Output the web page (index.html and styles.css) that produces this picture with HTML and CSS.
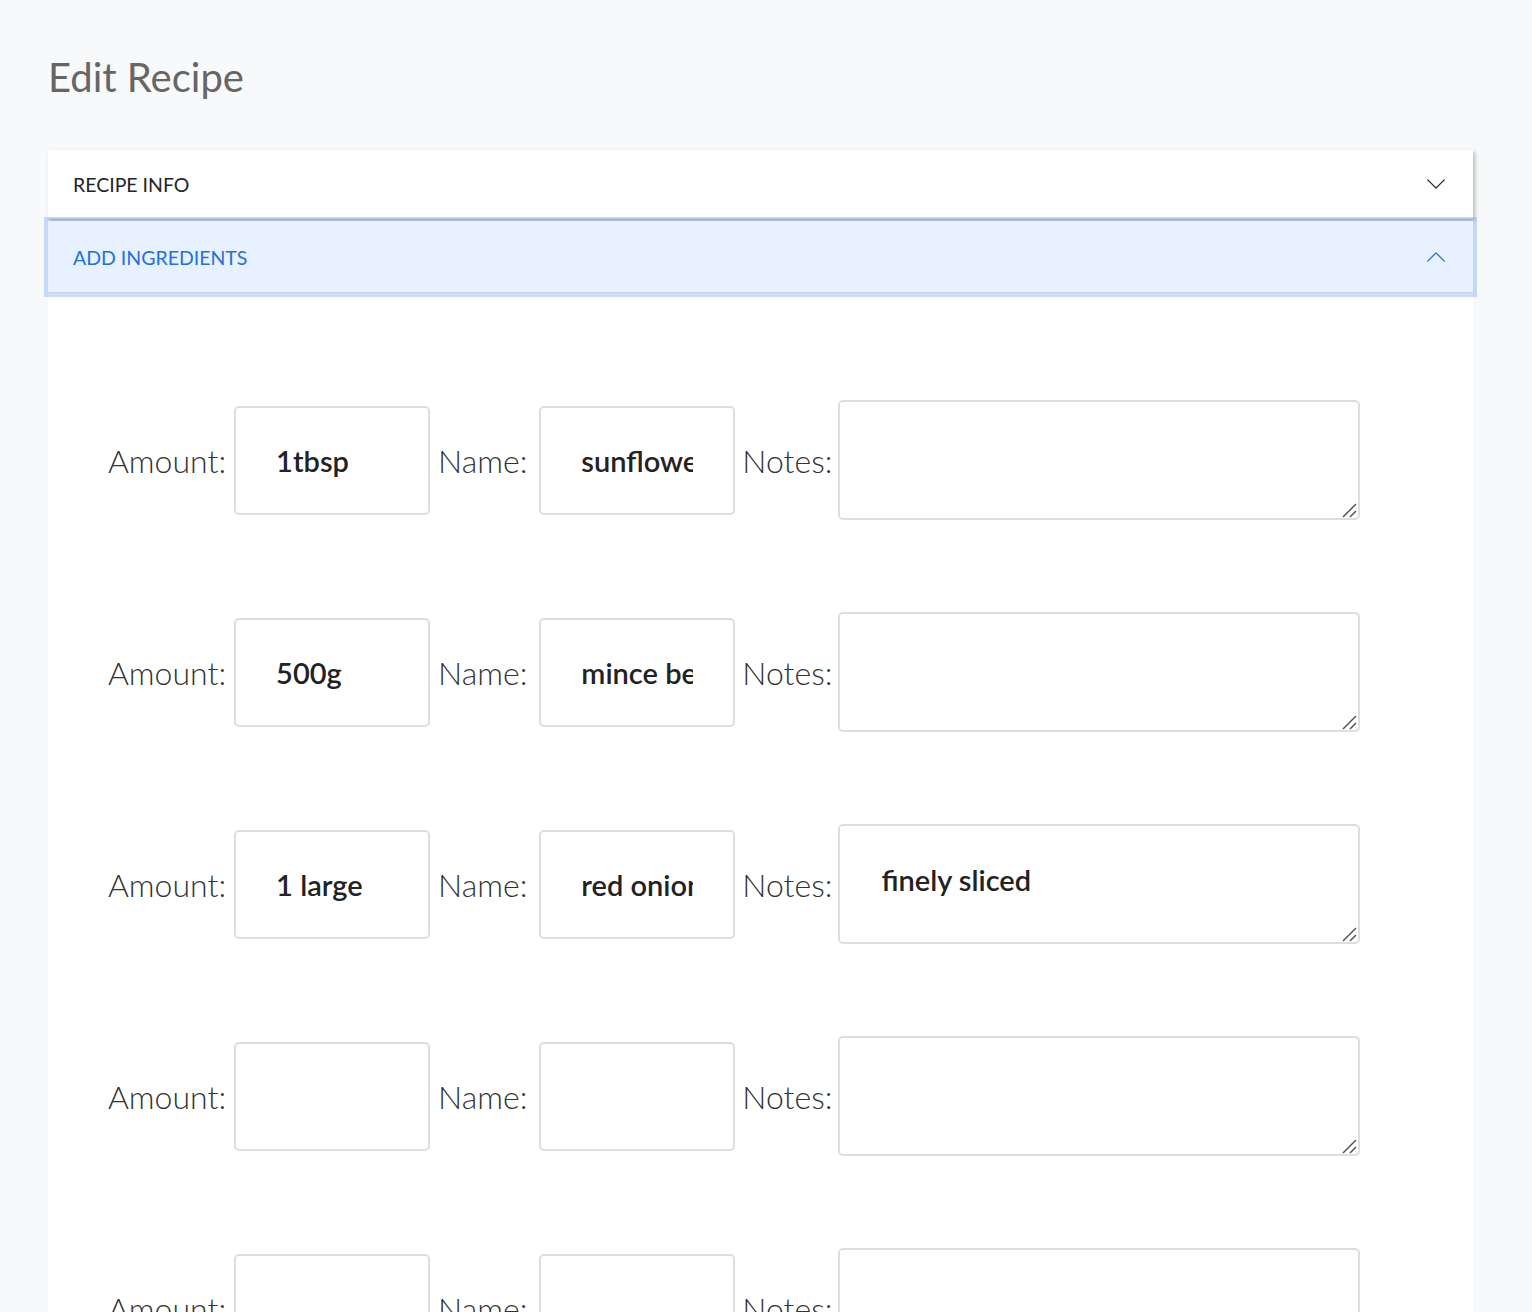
FILE: index.html
```html
<!DOCTYPE html>
<html>
<head>
<meta charset="utf-8">
<title>Edit Recipe</title>
<link rel="stylesheet" href="styles.css">
</head>
<body>
<h1 class="page-title">Edit Recipe</h1>
<div class="accordion">
  <div class="acc-item first">
    <div class="acc-header">
      <span>RECIPE INFO</span>
      <svg class="chev" viewBox="0 0 16 16" width="22" height="22"><path fill="currentColor" fill-rule="evenodd" d="M1.646 4.646a.5.5 0 0 1 .708 0L8 10.293l5.646-5.647a.5.5 0 0 1 .708.708l-6 6a.5.5 0 0 1-.708 0l-6-6a.5.5 0 0 1 0-.708z"/></svg>
    </div>
  </div>
  <div class="acc-item">
    <div class="acc-header active">
      <span>ADD INGREDIENTS</span>
      <svg class="chev up" viewBox="0 0 16 16" width="22" height="22"><path fill="currentColor" fill-rule="evenodd" d="M1.646 4.646a.5.5 0 0 1 .708 0L8 10.293l5.646-5.647a.5.5 0 0 1 .708.708l-6 6a.5.5 0 0 1-.708 0l-6-6a.5.5 0 0 1 0-.708z"/></svg>
    </div>
    <div class="acc-body">
      <div class="ing-row">
        <label class="lbl">Amount:</label><input class="field" value="1tbsp">
        <label class="lbl name">Name:</label><input class="field" value="sunflower oil">
        <label class="lbl notes-lbl">Notes:</label>
        <span class="notes-wrap"><textarea class="notes"></textarea><svg class="grip" viewBox="0 0 16 16" width="16" height="16"><path d="M2 15 L15 2 M9 15 L15 9" stroke="#555" stroke-width="1.5" fill="none"/></svg></span>
      </div>
      <div class="ing-row">
        <label class="lbl">Amount:</label><input class="field" value="500g">
        <label class="lbl name">Name:</label><input class="field" value="mince beef">
        <label class="lbl notes-lbl">Notes:</label>
        <span class="notes-wrap"><textarea class="notes"></textarea><svg class="grip" viewBox="0 0 16 16" width="16" height="16"><path d="M2 15 L15 2 M9 15 L15 9" stroke="#555" stroke-width="1.5" fill="none"/></svg></span>
      </div>
      <div class="ing-row">
        <label class="lbl">Amount:</label><input class="field" value="1 large">
        <label class="lbl name">Name:</label><input class="field" value="red onion">
        <label class="lbl notes-lbl">Notes:</label>
        <span class="notes-wrap"><textarea class="notes">finely sliced</textarea><svg class="grip" viewBox="0 0 16 16" width="16" height="16"><path d="M2 15 L15 2 M9 15 L15 9" stroke="#555" stroke-width="1.5" fill="none"/></svg></span>
      </div>
      <div class="ing-row">
        <label class="lbl">Amount:</label><input class="field" value="">
        <label class="lbl name">Name:</label><input class="field" value="">
        <label class="lbl notes-lbl">Notes:</label>
        <span class="notes-wrap"><textarea class="notes"></textarea><svg class="grip" viewBox="0 0 16 16" width="16" height="16"><path d="M2 15 L15 2 M9 15 L15 9" stroke="#555" stroke-width="1.5" fill="none"/></svg></span>
      </div>
      <div class="ing-row">
        <label class="lbl">Amount:</label><input class="field" value="">
        <label class="lbl name">Name:</label><input class="field" value="">
        <label class="lbl notes-lbl">Notes:</label>
        <span class="notes-wrap"><textarea class="notes"></textarea><svg class="grip" viewBox="0 0 16 16" width="16" height="16"><path d="M2 15 L15 2 M9 15 L15 9" stroke="#555" stroke-width="1.5" fill="none"/></svg></span>
      </div>
    </div>
  </div>
</div>
</body>
</html>
```
FILE: styles.css
```css
html, body {
  margin: 0;
  padding: 0;
  background: #f8f9fa;
  font-family: "Lato", "Liberation Sans", sans-serif;
}
body {
  padding: 0 0 0 48px;
  overflow: hidden;
  height: 1312px;
  box-sizing: border-box;
}
.page-title {
  margin: 0;
  padding-top: 53px;
  height: 150px;
  box-sizing: border-box;
  font-size: 40px;
  font-weight: 400;
  color: #666;
  line-height: 48px;
}
.accordion {
  width: 1425px;
}
.acc-item {
  background: #fff;
}
.acc-item.first {
  box-shadow: 2px 2px 4px rgba(0,0,0,0.25);
  position: relative;
  z-index: 1;
}
.acc-header {
  height: 69px;
  box-sizing: border-box;
  display: flex;
  align-items: center;
  justify-content: space-between;
  padding: 0 26px 0 25px;
  font-size: 19.5px;
  color: #212529;
  border-bottom: 1px solid rgba(0,0,0,0.125);
}
.acc-header.active {
  height: 72px;
  margin-top: 2px;
  background: #e7f1ff;
  color: #2470dc;
  position: relative;
  z-index: 2;
  box-shadow: 0 0 0 4px rgba(13,110,253,0.22), inset 0 -1px 0 rgba(0,0,0,0.125);
  border-bottom: none;
}
.chev { display: block; }
.chev.up { transform: rotate(180deg); }
.acc-body {
  background: #fff;
  padding: 107px 0 0 60px;
  display: flex;
  flex-direction: column;
  gap: 92px;
  height: 1100px;
}
.ing-row {
  display: flex;
  align-items: center;
  gap: 8px;
}
.lbl {
  font-size: 32px;
  font-weight: 300;
  color: #333;
}
.lbl.name {
  margin-right: 4px;
}
.lbl.notes-lbl {
  margin-left: -1px;
  margin-right: -2px;
}
.field {
  width: 196px;
  height: 109px;
  box-sizing: border-box;
  border: 2px solid #dedede;
  border-radius: 5px;
  padding: 0 40px 0 40px;
  font-family: "Lato", "Liberation Sans", sans-serif;
  font-size: 29px;
  font-weight: 600;
  color: #222;
  background: #fff;
  outline: none;
}
.notes-wrap {
  position: relative;
  display: block;
  width: 522px;
  height: 120px;
}
.notes {
  display: block;
  width: 522px;
  height: 120px;
  box-sizing: border-box;
  border: 2px solid #dedede;
  border-radius: 5px;
  padding: 36px 40px 0 41px;
  font-family: "Lato", "Liberation Sans", sans-serif;
  font-size: 29px;
  font-weight: 600;
  color: #222;
  background: #fff;
  outline: none;
  resize: none;
}
.grip {
  position: absolute;
  right: 3px;
  bottom: 2px;
}
```
